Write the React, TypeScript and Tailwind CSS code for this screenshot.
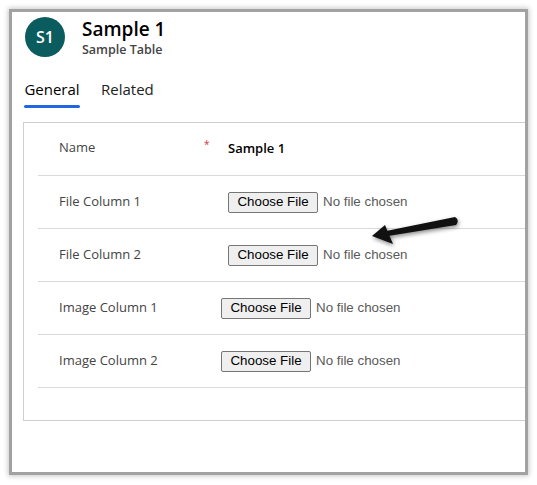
import { type ReactNode } from 'react';

const font = { fontFamily: '"Open Sans", "Noto Sans", Arial, sans-serif' };

function FilePicker() {
  return (
    <div className="flex items-center gap-[5px]" style={{ fontFamily: '"Liberation Sans", Arial, sans-serif' }}>
      <button className="h-[21px] w-[90px] bg-[#efefef] border border-[#767676] rounded-[2px] text-[13.33px] text-black leading-none">
        Choose File
      </button>
      <span className="text-[13.33px] text-[#5a5a5a]">No file chosen</span>
    </div>
  );
}

function Row({ label, labelW, required, children, nameRow }: { label: string; labelW: string; required?: boolean; children: ReactNode; nameRow?: boolean }) {
  return (
    <div className="h-[53px] border-b border-[#d9d9d9] flex items-center pl-[21px]">
      <div className={`relative shrink-0 ${labelW} ${nameRow ? '-mt-[7px]' : '-mt-[4px]'}`}>
        <span className="text-[13px] text-[#444]">{label}</span>
        {required && <span className="absolute left-[145px] top-[3px] text-[10px] text-[#d13438]">*</span>}
      </div>
      {children}
    </div>
  );
}

export default function App() {
  return (
    <div className="w-[537px] h-[485px] bg-white overflow-hidden pt-[12px] pl-[12px]" style={font}>
      <div className="relative w-[513px] h-[460px] bg-white overflow-hidden shadow-[0_0_0_3px_#a2a2a2,0_0_5px_4px_rgba(0,0,0,0.22)]">
        <div className="flex items-start pt-[5px] pl-[13px]">
          <div className="w-[40px] h-[40px] rounded-full bg-[#0b5c5e] flex items-center justify-center text-white text-[16px] font-semibold">
            S1
          </div>
          <div className="ml-[17px] -mt-[1px]">
            <div className="text-[19px] font-semibold text-black leading-[26px]">Sample 1</div>
            <div className="text-[12.5px] font-semibold text-[#444] leading-[16px]">Sample Table</div>
          </div>
        </div>

        <div className="flex gap-[21px] pl-[12px] mt-[20px]">
          <div className="flex flex-col items-center">
            <span className="text-[15px] text-black leading-[22px]">General</span>
            <span className="mt-[5px] h-[3px] w-[56px] rounded-full bg-[#2266e3]" />
          </div>
          <span className="text-[15px] text-[#222] leading-[22px]">Related</span>
        </div>

        <div className="mt-[14px] ml-[11px] w-[520px] h-[299px] border border-[#cfcfcf] pl-[14px]">
          <Row label="Name" labelW="w-[169px]" required nameRow>
            <span className="text-[13px] font-semibold text-black">Sample 1</span>
          </Row>
          <Row label="File Column 1" labelW="w-[169px]">
            <FilePicker />
          </Row>
          <Row label="File Column 2" labelW="w-[169px]">
            <FilePicker />
          </Row>
          <Row label="Image Column 1" labelW="w-[162px]">
            <FilePicker />
          </Row>
          <Row label="Image Column 2" labelW="w-[162px]">
            <FilePicker />
          </Row>
        </div>

        {/* annotation arrow */}
        <svg
          className="absolute left-[340px] top-[198px]"
          width="130"
          height="60"
          viewBox="352 210 130 60"
          style={{ filter: 'drop-shadow(1px 2px 2px rgba(0,0,0,0.45))' }}
        >
          <path d="M455 217 Q460 220 456 225 L388 236 L386 231 Z" fill="#111" />
          <polygon points="372,236 385,225 393,244" fill="#111" />
        </svg>
      </div>
    </div>
  );
}
